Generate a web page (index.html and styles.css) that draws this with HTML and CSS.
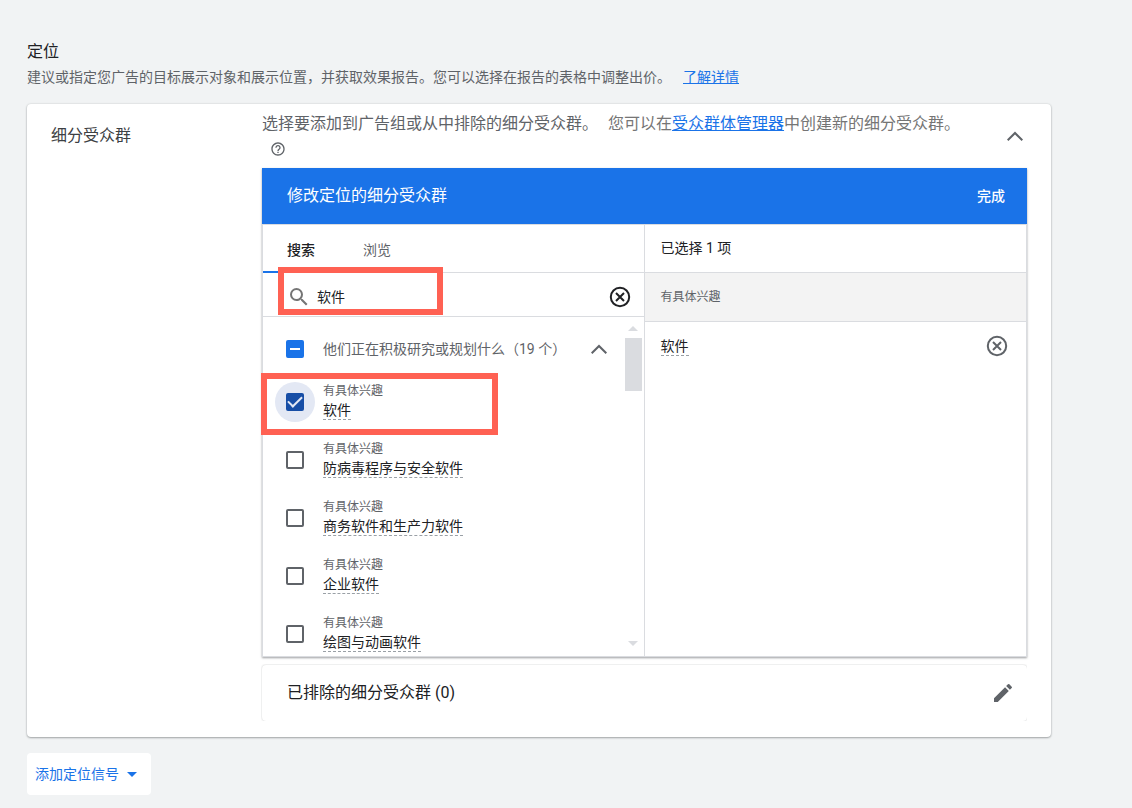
FILE: index.html
```html
<!DOCTYPE html>
<html lang="zh-CN">
<head>
<meta charset="utf-8">
<meta name="viewport" content="width=device-width, initial-scale=1">
<title>定位</title>
<link rel="stylesheet" href="styles.css">
</head>
<body>
<main class="page">
  <h1 class="page-title">定位</h1>
  <p class="page-desc"><span>建议或指定您广告的目标展示对象和展示位置，并获取效果报告。您可以选择在报告的表格中调整出价。</span><a class="link" href="#">了解详情</a></p>

  <section class="card">
    <h2 class="card-label">细分受众群</h2>
    <div class="card-main">
      <header class="intro">
        <div class="intro-text">
          <p>选择要添加到广告组或从中排除的细分受众群。<span class="intro-note">您可以在<a class="link" href="#">受众群体管理器</a>中创建新的细分受众群。</span></p>
          <button class="icon-button help" type="button" aria-label="帮助">
            <svg width="16" height="16" viewBox="0 0 24 24" fill="currentColor"><path d="M11 18h2v-2h-2v2zm1-16C6.480 2 2 6.480 2 12s4.480 10 10 10 10-4.480 10-10S17.520 2 12 2zm0 18c-4.410 0-8-3.590-8-8s3.590-8 8-8 8 3.590 8 8-3.590 8-8 8zm0-14c-2.210 0-4 1.790-4 4h2c0-1.100.9-2 2-2s2 .9 2 2c0 2-3 1.750-3 5h2c0-2.250 3-2.500 3-5 0-2.210-1.790-4-4-4z"/></svg>
          </button>
        </div>
        <button class="icon-button" type="button" aria-label="收起">
          <svg width="24" height="24" viewBox="0 0 24 24" fill="currentColor"><path d="M12 7.500l-8 8L5.400 17 12 10.400 18.600 17 20 15.500z"/></svg>
        </button>
      </header>

      <section class="panel">
        <header class="panel-head">
          <h3 class="panel-title">修改定位的细分受众群</h3>
          <button class="done" type="button">完成</button>
        </header>
        <div class="panel-body">
          <div class="pane picker">
            <nav class="tabs">
              <button class="tab tab-active" type="button">搜索</button>
              <button class="tab" type="button">浏览</button>
            </nav>
            <div class="search">
              <svg class="search-icon" width="24" height="24" viewBox="0 0 24 24" fill="currentColor"><path d="M15.500 14h-.79l-.28-.27A6.470 6.470 0 0 0 16 9.500 6.500 6.500 0 1 0 9.500 16c1.610 0 3.090-.59 4.230-1.570l.27.28v.79l5 4.990L20.490 19l-4.990-5zm-6 0C7.010 14 5 11.990 5 9.500S7.010 5 9.500 5 14 7.010 14 9.500 11.990 14 9.500 14z"/></svg>
              <input class="search-input" type="text" value="软件" aria-label="搜索">
              <button class="icon-button clear" type="button" aria-label="清除">
                <svg width="24" height="24" viewBox="0 0 24 24" fill="none" stroke="currentColor" stroke-width="2"><circle cx="12" cy="12" r="9.200"/><path d="M8 8l8 8M16 8l-8 8"/></svg>
              </button>
            </div>
            <div class="results">
              <div class="list">
                <div class="group">
                  <span class="box-wrap"><input class="box box-partial" id="group" type="checkbox" checked></span>
                  <label class="group-name" for="group">他们正在积极研究或规划什么（19 个）</label>
                  <button class="icon-button" type="button" aria-label="收起分组">
                    <svg width="24" height="24" viewBox="0 0 24 24" fill="currentColor"><path d="M12 7.500l-8 8L5.400 17 12 10.400 18.600 17 20 15.500z"/></svg>
                  </button>
                </div>
                <div class="item">
                  <span class="box-wrap box-focus"><input class="box box-ticked" id="i1" type="checkbox" checked></span>
                  <label class="item-label" for="i1"><span class="kind">有具体兴趣</span><span class="name">软件</span></label>
                </div>
                <div class="item">
                  <span class="box-wrap"><input class="box" id="i2" type="checkbox"></span>
                  <label class="item-label" for="i2"><span class="kind">有具体兴趣</span><span class="name">防病毒程序与安全软件</span></label>
                </div>
                <div class="item">
                  <span class="box-wrap"><input class="box" id="i3" type="checkbox"></span>
                  <label class="item-label" for="i3"><span class="kind">有具体兴趣</span><span class="name">商务软件和生产力软件</span></label>
                </div>
                <div class="item">
                  <span class="box-wrap"><input class="box" id="i4" type="checkbox"></span>
                  <label class="item-label" for="i4"><span class="kind">有具体兴趣</span><span class="name">企业软件</span></label>
                </div>
                <div class="item">
                  <span class="box-wrap"><input class="box" id="i5" type="checkbox"></span>
                  <label class="item-label" for="i5"><span class="kind">有具体兴趣</span><span class="name">绘图与动画软件</span></label>
                </div>
              </div>
              <div class="scrollbar" aria-hidden="true">
                <span class="arrow-up"></span>
                <span class="thumb"></span>
                <span class="arrow-down"></span>
              </div>
            </div>
            <div class="mark mark-search"></div>
            <div class="mark mark-item"></div>
          </div>

          <div class="pane chosen">
            <div class="chosen-head">已选择 1 项</div>
            <div class="chosen-kind">有具体兴趣</div>
            <div class="chosen-item">
              <span class="name">软件</span>
              <button class="icon-button" type="button" aria-label="移除">
                <svg width="24" height="24" viewBox="0 0 24 24" fill="none" stroke="currentColor" stroke-width="2"><circle cx="12" cy="12" r="9.200"/><path d="M8 8l8 8M16 8l-8 8"/></svg>
              </button>
            </div>
          </div>
        </div>
      </section>

      <section class="excluded">
        <h3 class="excluded-title">已排除的细分受众群 (0)</h3>
        <button class="icon-button" type="button" aria-label="修改">
          <svg width="24" height="24" viewBox="0 0 24 24" fill="currentColor"><path d="M3 17.250V21h3.750L17.810 9.940l-3.750-3.750L3 17.250zM20.710 7.040a1 1 0 0 0 0-1.410l-2.340-2.340a1 1 0 0 0-1.410 0l-1.830 1.830 3.750 3.750 1.830-1.830z"/></svg>
        </button>
      </section>
    </div>
  </section>

  <button class="add" type="button">添加定位信号<span class="caret"></span></button>
</main>
</body>
</html>
```

FILE: styles.css
```css
* {
  box-sizing: border-box;
}

body {
  margin: 0;
  background: #f1f3f4;
  color: #202124;
  font-family: Roboto, "Noto Sans CJK SC", sans-serif;
  font-size: 14px;
  line-height: 20px;
}

h1, h2, h3, p {
  margin: 0;
  font-weight: 400;
}

button, input {
  margin: 0;
  padding: 0;
  border: 0;
  background: none;
  color: inherit;
  font: inherit;
}

svg {
  display: block;
}

.page {
  padding: 40px 81px 12px 27px;
}

.page-title {
  font-size: 16px;
  line-height: 24px;
}

.page-desc {
  display: flex;
  gap: 12px;
  margin-bottom: 14px;
  color: #5f6368;
  line-height: 26px;
}

.link {
  color: #1a73e8;
  text-decoration: underline;
}

.card {
  display: grid;
  grid-template-columns: 211px minmax(0, 1fr);
  padding: 8px 24px 16px;
  border-radius: 4px;
  background: #fff;
  box-shadow: 0 1px 2px rgba(60, 64, 67, 0.4), 0 0 2px rgba(60, 64, 67, 0.2);
}

.card-label {
  padding-top: 12px;
  color: #3c4043;
  font-size: 16px;
  line-height: 24px;
}

.icon-button {
  flex: none;
  color: #5f6368;
}

.intro {
  display: flex;
  align-items: center;
  justify-content: space-between;
  padding-bottom: 8px;
}

.intro .icon-button {
  display: block;
}

.intro-text {
  color: #5f6368;
  font-size: 16px;
  line-height: 24px;
}

.intro-note {
  margin-left: 10px;
  color: #757575;
}

.intro .help {
  height: 24px;
  padding-top: 2px;
  margin-left: 8px;
}

.panel {
  background: #fff;
  box-shadow: 0 1px 2px rgba(60, 64, 67, 0.5);
}

.panel-head {
  display: flex;
  align-items: center;
  justify-content: space-between;
  height: 56px;
  padding: 0 22px 0 25px;
  background: #1a73e8;
  color: #fff;
}

.panel-title {
  font-size: 16px;
  line-height: 24px;
}

.done {
  font-weight: 500;
}

.panel-body {
  display: grid;
  grid-template-columns: 1fr 1fr;
  border: 1px solid #dadce0;
}

.pane {
  position: relative;
  min-width: 0;
}

.picker {
  border-right: 1px solid #dadce0;
}

.tabs {
  display: flex;
  height: 48px;
  border-bottom: 1px solid #dadce0;
}

.tab {
  height: 48px;
  padding: 3px 24px 0;
  border-bottom: 2px solid transparent;
  color: #5f6368;
}

.tab-active {
  border-color: #1a73e8;
  color: #202124;
  font-weight: 500;
}

.search {
  display: flex;
  align-items: center;
  height: 44px;
  padding: 4px 12px 0 24px;
  border-bottom: 1px solid #dadce0;
}

.search-icon {
  flex: none;
  color: #757575;
}

.search-input {
  flex: 1;
  min-width: 0;
  height: 24px;
  padding: 0 0 2px 6px;
  outline: 0;
}

.clear {
  color: #202124;
}

.results {
  display: flex;
  height: 339px;
  padding-right: 2px;
}

.list {
  flex: 1;
  min-width: 0;
  padding-top: 8px;
  overflow: hidden;
}

.group {
  display: flex;
  align-items: center;
  height: 48px;
  padding: 0 14px 0 12px;
}

.group-name {
  flex: 1;
  margin-left: 8px;
  color: #5f6368;
  white-space: nowrap;
}

.box-wrap {
  display: flex;
  flex: none;
  align-items: center;
  justify-content: center;
  width: 40px;
  height: 40px;
  border-radius: 50%;
}

.box-focus {
  background: #e3e8f4;
}

.box {
  display: flex;
  align-items: center;
  justify-content: center;
  width: 18px;
  height: 18px;
  border: 2px solid #5f6368;
  border-radius: 2px;
  appearance: none;
}

.box-partial {
  border-color: #1a73e8;
  background: #1a73e8;
}

.box-partial::after {
  width: 10px;
  height: 2px;
  background: #fff;
  content: "";
}

.box-ticked {
  border-color: #174ea6;
  background: #174ea6;
}

.box-ticked::after {
  flex: none;
  width: 12px;
  height: 6px;
  margin-bottom: 4px;
  border: solid #e3e8f4;
  border-width: 0 0 2px 2px;
  transform: rotate(-45deg);
  content: "";
}

.item {
  display: flex;
  align-items: center;
  height: 58px;
  padding-left: 12px;
}

.item-label {
  display: flex;
  flex-direction: column;
  align-items: flex-start;
  gap: 2px;
  padding-bottom: 2px;
  margin-left: 8px;
}

.kind {
  color: #5f6368;
  font-size: 12px;
  line-height: 16px;
}

.name {
  border-bottom: 1px dashed #9aa0a6;
  line-height: 18px;
}

.scrollbar {
  display: flex;
  flex-direction: column;
  align-items: center;
  width: 17px;
  padding: 9px 0 10px;
}

.arrow-up, .arrow-down {
  border: 5px solid transparent;
}

.arrow-up {
  border-top-width: 0;
  border-bottom-color: #dadce0;
}

.arrow-down {
  margin-top: auto;
  border-bottom-width: 0;
  border-top-color: #dadce0;
}

.thumb {
  width: 17px;
  height: 53px;
  margin-top: 7px;
  background: #dadce0;
}

/* Red call-outs drawn over the picker */
.mark {
  position: absolute;
  border: 6px solid #ff6153;
  pointer-events: none;
}

.mark-search {
  top: 42px;
  left: 15px;
  width: 165px;
  height: 48px;
}

.mark-item {
  top: 148px;
  left: -2px;
  width: 237px;
  height: 62px;
}

.chosen-head, .chosen-kind, .chosen-item {
  display: flex;
  align-items: center;
  padding: 0 17px 0 16px;
}

.chosen-head {
  height: 48px;
  padding-bottom: 2px;
  border-bottom: 1px solid #dadce0;
}

.chosen-kind {
  height: 49px;
  border-bottom: 1px solid #dadce0;
  background: #f3f3f3;
  color: #5f6368;
  font-size: 12px;
}

.chosen-item {
  justify-content: space-between;
  height: 48px;
}

.excluded {
  display: flex;
  align-items: center;
  justify-content: space-between;
  height: 56px;
  margin-top: 8px;
  padding: 0 12px 0 25px;
  border-radius: 4px;
  box-shadow: 0 0 2px rgba(60, 64, 67, 0.3);
  clip-path: inset(-1px 0 0 -1px);
}

.excluded-title {
  font-size: 16px;
  line-height: 24px;
}

.add {
  display: flex;
  align-items: center;
  gap: 8px;
  height: 42px;
  margin-top: 16px;
  padding: 0 14px 0 8px;
  border-radius: 4px;
  background: #fff;
  color: #1a73e8;
}

.caret {
  border: 5px solid transparent;
  border-top-color: #1a73e8;
  border-bottom-width: 0;
}
```
